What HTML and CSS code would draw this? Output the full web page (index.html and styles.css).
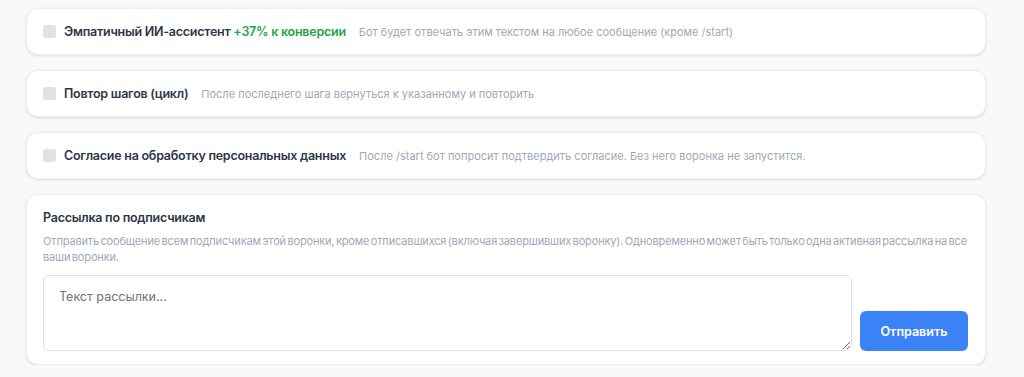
FILE: index.html
```html
<!DOCTYPE html>
<html lang="ru">
  <head>
    <meta charset="UTF-8" />
    <meta name="viewport" content="width=device-width, initial-scale=1.0" />
    <title>Настройки воронки</title>
    <link rel="stylesheet" href="styles.css">
  </head>
  <body>
    <div class="settings">
      <label class="option-card">
        <input type="checkbox" class="option-check" />
        <span class="option-title">Эмпатичный ИИ-ассистент <span class="badge-green">+37% к конверсии</span></span>
        <span class="option-desc">Бот будет отвечать этим текстом на любое сообщение (кроме /start)</span>
      </label>

      <label class="option-card">
        <input type="checkbox" class="option-check" />
        <span class="option-title">Повтор шагов (цикл)</span>
        <span class="option-desc">После последнего шага вернуться к указанному и повторить</span>
      </label>

      <label class="option-card">
        <input type="checkbox" class="option-check" />
        <span class="option-title">Согласие на обработку персональных данных</span>
        <span class="option-desc">После /start бот попросит подтвердить согласие. Без него воронка не запустится.</span>
      </label>

      <div class="broadcast-card">
        <h3 class="broadcast-title">Рассылка по подписчикам</h3>
        <p class="broadcast-desc">Отправить сообщение всем подписчикам этой воронки, кроме отписавшихся (включая завершивших воронку). Одновременно может быть только одна активная рассылка на все ваши воронки.</p>
        <div class="broadcast-row">
          <textarea class="broadcast-text" placeholder="Текст рассылки..."></textarea>
          <button class="send-button">Отправить</button>
        </div>
      </div>
    </div>
  </body>
</html>
```

FILE: styles.css
```css
body {
  margin: 0;
  background-color: #f8f9fb;
  font-family: Inter, "Noto Sans", sans-serif;
  color: #1f2937;
}
.settings {
  width: 960px;
  margin-left: 26px;
  padding-top: 8px;
  display: flex;
  flex-direction: column;
  gap: 15px;
}
.option-card {
  display: flex;
  align-items: center;
  height: 47px;
  box-sizing: border-box;
  padding: 0 16px;
  background: #fff;
  border: 1px solid #eceef2;
  border-radius: 12px;
  box-shadow: 0 1px 3px rgba(17, 24, 39, 0.12);
  cursor: pointer;
}
.option-check {
  appearance: none;
  width: 13px;
  height: 13px;
  margin: 0 8px 0 0;
  background: #dfe2e7;
  border-radius: 3px;
}
.option-title {
  font-size: 12.5px;
  letter-spacing: -0.25px;
  font-weight: 600;
  color: #2d3748;
  margin-right: 13px;
}
.badge-green {
  color: #22a447;
}
.option-desc {
  font-size: 11px;
  color: #a0a8b8;
}
.broadcast-card {
  background: #fff;
  border: 1px solid #eceef2;
  border-radius: 12px;
  box-shadow: 0 1px 3px rgba(17, 24, 39, 0.12);
  padding: 15px 17px 13px 16px;
}
.broadcast-title {
  margin: 0 0 8px;
  font-size: 12.5px;
  letter-spacing: -0.25px;
  font-weight: 600;
  color: #2d3748;
}
.broadcast-desc {
  margin: 0 0 10px;
  font-size: 11px;
  letter-spacing: -0.15px;
  word-spacing: -1.5px;
  line-height: 16px;
  color: #a0a8b8;
}
.broadcast-row {
  display: flex;
  align-items: flex-end;
  gap: 8px;
}
.broadcast-text {
  flex: 1;
  height: 76px;
  box-sizing: border-box;
  padding: 13px 15px;
  border: 1px solid #dde1e7;
  border-radius: 6px;
  font-family: inherit;
  font-size: 12.5px;
  resize: vertical;
}
.broadcast-text::placeholder {
  color: #6b7280;
}
.send-button {
  width: 108px;
  height: 40px;
  border: none;
  border-radius: 6px;
  background: #3b82f6;
  color: #fff;
  font-family: inherit;
  font-size: 12.5px;
  font-weight: 600;
}
```
